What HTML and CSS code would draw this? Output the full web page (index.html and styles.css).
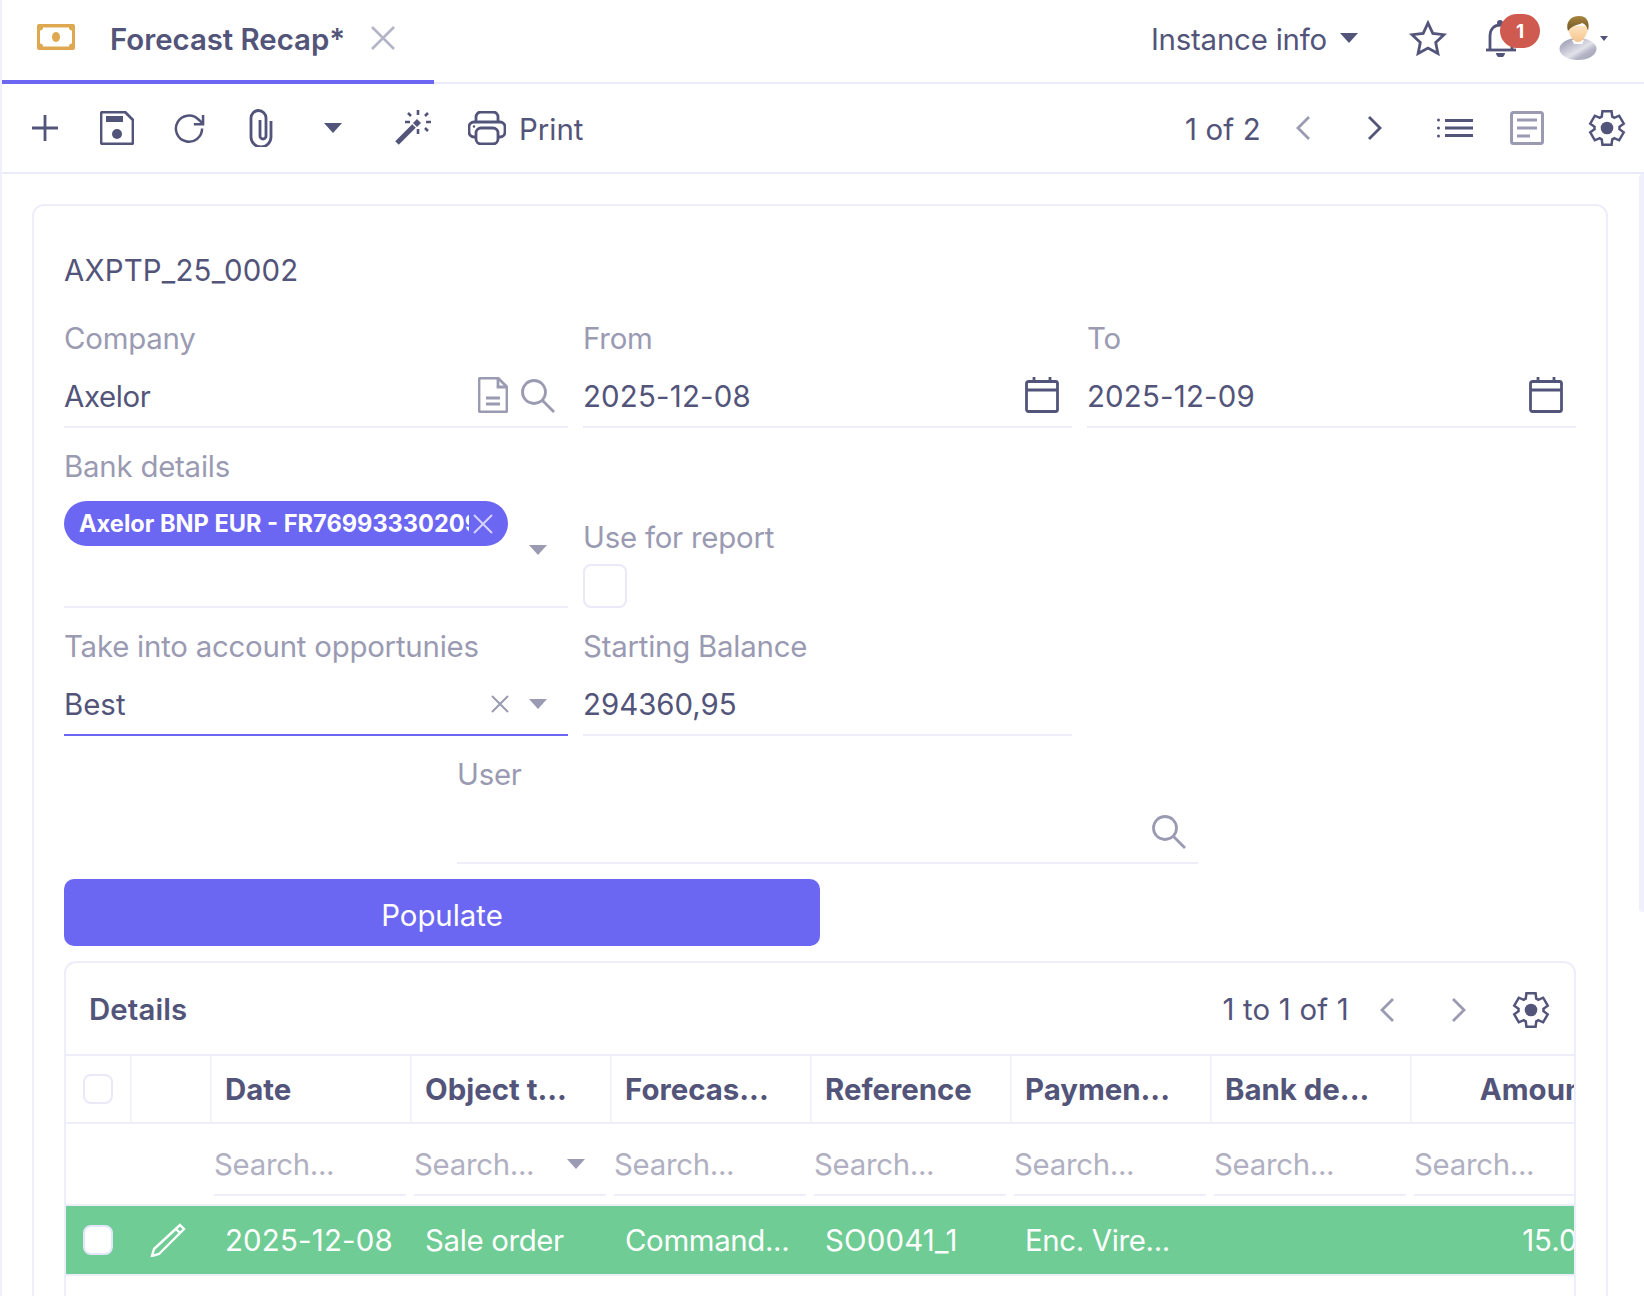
FILE: index.html
```html
<!DOCTYPE html>
<html lang="en">
<head>
<meta charset="utf-8">
<title>Forecast Recap</title>
<link rel="stylesheet" href="styles.css">
</head>
<body>
<div class="app">
  <header class="topbar">
    <div class="tab">
      <svg class="ic-money" viewBox="0 0 38 26"><path class="gold" d="M2 0h34a2 2 0 0 1 2 2v22a2 2 0 0 1-2 2H2a2 2 0 0 1-2-2V2a2 2 0 0 1 2-2z"/><path class="paper" d="M6 3.500h26a3 3 0 0 0 3 3v13a3 3 0 0 0-3 3H6a3 3 0 0 0-3-3v-13a3 3 0 0 0 3-3z"/><ellipse class="gold" cx="19" cy="13" rx="4" ry="5"/></svg>
      <span class="tab-title">Forecast Recap*</span>
      <svg class="ic-close" viewBox="0 0 26 26"><path d="M2 2l22 22M24 2L2 24"/></svg>
    </div>
    <div class="top-right">
      <span class="instance">Instance info</span>
      <span class="caret caret-dark caret-top"></span>
      <svg class="ic-star" viewBox="0 0 38 36"><path d="M19 3l4.800 10.400 11.200 1.300-8.300 7.700 2.200 11.100L19 28l-9.900 5.500 2.200-11.100L3 14.700l11.200-1.300z"/></svg>
      <div class="bell-wrap">
        <svg class="ic-bell" viewBox="0 0 32 38"><path class="st" d="M5 30V17C5 10 9 6 16 6s11 4 11 11v13"/><path class="st" d="M1 31h30"/><circle class="fl" cx="15" cy="4" r="3"/><path class="fl" d="M11 34h9a4.500 4.500 0 0 1-9 0z"/></svg>
        <span class="badge">1</span>
      </div>
      <svg class="ic-avatar" viewBox="0 0 38 44">
        <defs>
          <linearGradient id="shirt" x1="0" y1="0" x2="1" y2="1"><stop offset="0" stop-color="#8f90a8"/><stop offset=".55" stop-color="#e2e2ea"/><stop offset=".7" stop-color="#b4b5c6"/><stop offset="1" stop-color="#9a9bb0"/></linearGradient>
          <linearGradient id="skin" x1="0" y1="0" x2="0" y2="1"><stop offset="0" stop-color="#fde3bf"/><stop offset="1" stop-color="#f6c48e"/></linearGradient>
          <linearGradient id="hair" x1="0" y1="0" x2="0" y2="1"><stop offset="0" stop-color="#a8853f"/><stop offset="1" stop-color="#6e5526"/></linearGradient>
        </defs>
        <ellipse cx="19" cy="33" rx="18.500" ry="11" fill="url(#shirt)"/>
        <path d="M13 24h12l-2 4h-8z" fill="#fff"/>
        <path d="M9 10c0 8 5 16 10 16s10-8 10-16z" fill="url(#skin)"/>
        <path d="M9 15C6 6 12 0 20 0s11 6 9 15c-1-5-3-7-6-8-3 2-10 2-14 8z" fill="url(#hair)"/>
      </svg>
      <span class="caret caret-dark caret-tiny"></span>
    </div>
  </header>

  <nav class="toolbar">
    <div class="tool-pair">
      <button class="tool"><svg class="ic ic-plus" viewBox="0 0 26 26"><path d="M13 0v26M0 13h26"/></svg></button>
      <button class="tool"><svg class="ic" viewBox="0 0 34 34"><path d="M3 1h22l8 8v22a2 2 0 0 1-2 2H3a2 2 0 0 1-2-2V3a2 2 0 0 1 2-2z"/><rect class="fl" x="6" y="5" width="17" height="6"/><circle class="fl" cx="17" cy="23" r="5"/></svg></button>
      <button class="tool"><svg class="ic ic-refresh" viewBox="0 0 32 32"><path d="M29 16A13.500 13.500 0 1 1 25 6.500L30 11"/><path d="M30 2v9.500h-9.500"/></svg></button>
      <button class="tool"><svg class="ic ic-clip" viewBox="0 0 24 38"><path d="M22 12v16a10 10 0 0 1-20 0V9a7.500 7.500 0 0 1 15 0v18a3 3 0 0 1-6 0V11"/></svg></button>
      <button class="tool"><span class="caret caret-dark"></span></button>
    </div>
    <div class="tool-group">
      <button class="tool"><svg class="ic ic-wand" viewBox="0 0 36 36"><path class="thick" d="M2 33l17-17"/><path class="fl" d="M22 9l4 4-4 4-4-4z"/><path class="thin" d="M23 0v5M23 19v5M10 12h5M31 12h5M13 3l3 3M33 3l-3 3M30 18l3 3"/></svg></button>
    </div>
    <button class="print">
      <svg class="ic ic-printer" viewBox="0 0 38 34"><path d="M8 11V6a5 5 0 0 1 5-5h12a5 5 0 0 1 5 5v5"/><path d="M8 26H6a5 5 0 0 1-5-5v-5a5 5 0 0 1 5-5h26a5 5 0 0 1 5 5v5a5 5 0 0 1-5 5h-2"/><rect x="8" y="17" width="22" height="16" rx="5"/><circle class="fl" cx="6" cy="15.500" r="1.200"/></svg>
      <span class="text-low">Print</span>
    </button>
    <div class="toolbar-right">
      <span class="pager text-low">1 of 2</span>
      <div class="tool-group">
        <div class="tool-pair">
          <button class="tool"><svg class="ic ic-chev ic-muted" viewBox="0 0 16 26"><path d="M14 2L3 13l11 11"/></svg></button>
          <button class="tool"><svg class="ic ic-chev" viewBox="0 0 16 26"><path d="M2 2l11 11L2 24"/></svg></button>
        </div>
        <div class="tool-pair">
          <button class="tool"><svg class="ic ic-list" viewBox="0 0 36 20"><path class="thick" d="M8 2.500h28M8 10h28M8 17.500h28"/><circle class="fl" cx="1.500" cy="2" r="1.500"/><circle class="fl" cx="1.500" cy="10" r="1.500"/><circle class="fl" cx="1.500" cy="18" r="1.500"/></svg></button>
          <button class="tool"><svg class="ic ic-muted ic-form" viewBox="0 0 34 34"><rect x="1.500" y="1.500" width="31" height="31" rx="2"/><path d="M7 9h20M7 17h20M7 25h13"/></svg></button>
        </div>
        <button class="tool"><svg class="ic ic-gear" viewBox="0 0 24 24"><path d="M9.250 22l-.4-3.200q-.325-.125-.612-.3t-.563-.375L4.700 19.375l-2.750-4.750 2.575-1.950Q4.500 12.500 4.500 12.338v-.675q0-.163.025-.338L1.950 9.375l2.750-4.750 2.975 1.250q.275-.2.575-.375t.6-.3l.4-3.200h5.500l.4 3.200q.325.125.613.3t.562.375l2.975-1.250 2.750 4.750-2.575 1.950q.025.175.025.338v.675q0 .162-.05.337l2.575 1.950-2.750 4.750-2.950-1.250q-.275.2-.575.375t-.6.3l-.4 3.200h-5.500z"/><circle class="fl" cx="12" cy="12" r="3.800"/></svg></button>
      </div>
    </div>
  </nav>

  <main class="content">
    <section class="card">
      <div class="ref digits">AXPTP_25_0002</div>

      <div class="form-row">
        <div class="field">
          <label class="label">Company</label>
          <div class="value"><span class="grow tight">Axelor</span>
            <svg class="ic ic-muted ic-doc" viewBox="0 0 30 36"><path d="M3 1h17l9 9v23a2 2 0 0 1-2 2H3a2 2 0 0 1-2-2V3a2 2 0 0 1 2-2z"/><path d="M20 1v9h9"/><path d="M8 21h14M8 27h14"/></svg>
            <svg class="ic ic-muted ic-search" viewBox="0 0 34 34"><circle cx="13" cy="13" r="11.500"/><path d="M21.500 21.500L33 33"/></svg>
          </div>
        </div>
        <div class="field">
          <label class="label">From</label>
          <div class="value"><span class="grow digits">2025-12-08</span>
            <svg class="ic ic-cal" viewBox="0 0 34 36"><rect x="1.500" y="4.500" width="31" height="30" rx="2"/><path d="M1 13h32M9 0v6M25 0v6"/></svg>
          </div>
        </div>
        <div class="field">
          <label class="label">To</label>
          <div class="value"><span class="grow digits">2025-12-09</span>
            <svg class="ic ic-cal" viewBox="0 0 34 36"><rect x="1.500" y="4.500" width="31" height="30" rx="2"/><path d="M1 13h32M9 0v6M25 0v6"/></svg>
          </div>
        </div>
      </div>

      <div class="form-row">
        <div class="field">
          <label class="label">Bank details</label>
          <div class="value value-tags">
            <span class="chip"><span class="chip-text">Axelor BNP EUR - FR7699333020961234</span><svg class="ic-chip-x" viewBox="0 0 20 20"><path d="M1 1l18 18M19 1L1 19"/></svg></span>
            <span class="caret caret-muted caret-tags"></span>
          </div>
        </div>
        <div class="field field-bottom">
          <label class="label">Use for report</label>
          <span class="checkbox checkbox-lg"></span>
        </div>
      </div>

      <div class="form-row">
        <div class="field">
          <label class="label">Take into account opportunies</label>
          <div class="value value-focus"><span class="grow">Best</span>
            <svg class="ic-x-small" viewBox="0 0 18 18"><path d="M1 1l16 16M17 1L1 17"/></svg>
            <span class="caret caret-muted"></span>
          </div>
        </div>
        <div class="field">
          <label class="label">Starting Balance</label>
          <div class="value"><span class="grow">294360,95</span></div>
        </div>
      </div>

      <div class="field field-user">
        <label class="label">User</label>
        <div class="value value-user"><span class="grow"></span>
          <svg class="ic ic-muted ic-search" viewBox="0 0 34 34"><circle cx="13" cy="13" r="11.500"/><path d="M21.500 21.500L33 33"/></svg>
        </div>
      </div>

      <button class="populate">Populate</button>

      <section class="panel">
        <div class="panel-head">
          <span class="panel-title">Details</span>
          <div class="panel-tools">
            <span class="pager">1 to 1 of 1</span>
            <svg class="ic ic-chev ic-muted" viewBox="0 0 16 26"><path d="M14 2L3 13l11 11"/></svg>
            <svg class="ic ic-chev ic-muted" viewBox="0 0 16 26"><path d="M2 2l11 11L2 24"/></svg>
            <svg class="ic ic-gear" viewBox="0 0 24 24"><path d="M9.250 22l-.4-3.200q-.325-.125-.612-.3t-.563-.375L4.700 19.375l-2.750-4.750 2.575-1.950Q4.500 12.500 4.500 12.338v-.675q0-.163.025-.338L1.950 9.375l2.750-4.750 2.975 1.250q.275-.2.575-.375t.6-.3l.4-3.200h5.500l.4 3.200q.325.125.613.3t.562.375l2.975-1.250 2.750 4.750-2.575 1.950q.025.175.025.338v.675q0 .162-.05.337l2.575 1.950-2.750 4.750-2.950-1.250q-.275.2-.575.375t-.6.3l-.4 3.200h-5.500z"/><circle class="fl" cx="12" cy="12" r="3.800"/></svg>
          </div>
        </div>
        <div class="table">
          <div class="row row-head">
            <div class="cell cell-check"><span class="checkbox"></span></div>
            <div class="cell"></div>
            <div class="cell">Date</div>
            <div class="cell">Object t...</div>
            <div class="cell">Forecas...</div>
            <div class="cell">Reference</div>
            <div class="cell">Paymen...</div>
            <div class="cell">Bank de...</div>
            <div class="cell cell-num">Amount</div>
          </div>
          <div class="row row-search">
            <div class="cell"></div>
            <div class="cell"></div>
            <div class="cell"><div class="search">Search...</div></div>
            <div class="cell"><div class="search"><span class="grow">Search...</span><span class="caret caret-muted"></span></div></div>
            <div class="cell"><div class="search">Search...</div></div>
            <div class="cell"><div class="search">Search...</div></div>
            <div class="cell"><div class="search">Search...</div></div>
            <div class="cell"><div class="search">Search...</div></div>
            <div class="cell"><div class="search">Search...</div></div>
          </div>
          <div class="row row-data">
            <div class="cell cell-check"><span class="checkbox checkbox-white"></span></div>
            <div class="cell cell-edit"><svg class="ic-pencil" viewBox="0 0 36 34"><path d="M30 2l4 4L9 31l-7 2 2-7zM26 6l4 4"/></svg></div>
            <div class="cell digits">2025-12-08</div>
            <div class="cell tight">Sale order</div>
            <div class="cell tight">Command...</div>
            <div class="cell digits">SO0041_1</div>
            <div class="cell tight">Enc. Vire...</div>
            <div class="cell"></div>
            <div class="cell cell-num">15.00</div>
          </div>
        </div>
      </section>
    </section>
  </main>
  <div class="scrollbar"></div>
</div>
</body>
</html>
```

FILE: styles.css
```css
* { box-sizing: border-box; }
html, body { margin: 0; height: 100%; background: #fff; }
body {
  font-family: Inter, "Liberation Sans", sans-serif;
  font-size: 29.4px;
  color: #53547a;
  overflow: hidden;
}
button { font: inherit; color: inherit; background: none; border: 0; padding: 0; }
svg { display: block; flex: none; }

.app {
  position: relative;
  width: 1644px;
  height: 1296px;
  overflow: hidden;
  border-left: 2px solid #f0f0fd;
  display: flex;
  flex-direction: column;
}
.grow { flex: 1; min-width: 0; }
.fl { fill: #53547a; stroke: none !important; }
.digits { letter-spacing: .2px; }
.tight { letter-spacing: -.35px; }
.text-low { padding-top: 2px; }

/* Generic icon */
.ic { width: 34px; height: 34px; fill: none; stroke: #53547a; stroke-width: 2.800; }
.ic-muted { stroke: #9a9ab2; }
.ic-form { stroke-width: 3; }
.ic-refresh { width: 31px; height: 31px; stroke-width: 2.600; }
.ic-plus { width: 26px; height: 26px; }
.ic-clip { width: 24px; height: 38px; }
.ic-wand { width: 36px; height: 36px; }
.ic-wand .thick { stroke-width: 5; }
.ic-wand .thin { stroke-width: 2.600; }
.ic-printer { width: 38px; height: 34px; }
.ic-chev { width: 16px; height: 26px; }
.ic-list { width: 36px; height: 20px; }
.ic-list .thick { stroke-width: 3.200; }
.ic-gear { width: 40px; height: 40px; stroke-width: 1.500; }
.ic-doc { width: 30px; height: 36px; margin-right: 13px; margin-top: -2px; }
.ic-search { width: 34px; height: 34px; margin-right: 13px; }
.ic-cal { height: 36px; margin-right: 13px; margin-top: -2px; }

/* Carets */
.caret { display: block; flex: none; width: 0; height: 0; border-left: 9px solid transparent; border-right: 9px solid transparent; }
.caret-dark { border-top: 10px solid #53547a; }
.caret-muted { border-top: 10px solid #9a9ab2; }
.caret-top { margin-left: 13px; margin-right: 2px; }
.caret-tiny { border-width: 5px 4px 0; border-left-color: transparent; border-right-color: transparent; margin-left: 3px; margin-right: 36px; }

/* Top bar */
.topbar { flex: none; height: 84px; display: flex; align-items: center; justify-content: space-between; border-bottom: 2px solid #e9ebfb; position: relative; }
.tab { align-self: stretch; width: 432px; margin-bottom: -2px; border-bottom: 4px solid #6c67f2; display: flex; align-items: center; padding: 0 0 2px 35px; }
.ic-money { width: 38px; height: 26px; margin-top: -4px; }
.gold { fill: #dda84f; }
.paper { fill: #fff; }
.tab-title { margin-left: 35px; font-weight: 600; letter-spacing: -.03px; }
.ic-close { width: 26px; height: 26px; margin-left: 25px; margin-top: -3px; fill: none; stroke: #b4b4c8; stroke-width: 2.600; }
.top-right { display: flex; align-items: center; padding-bottom: 6px; }
.instance { padding-top: 3px; letter-spacing: -.2px; }
.ic-star { width: 38px; height: 36px; margin-left: 49px; fill: none; stroke: #53547a; stroke-width: 2.800; }
.bell-wrap { position: relative; width: 32px; height: 38px; margin-left: 38px; }
.ic-bell { width: 32px; height: 38px; }
.ic-bell .st { fill: none; stroke: #53547a; stroke-width: 2.800; }
.badge { position: absolute; left: 15px; top: -5px; width: 40px; height: 34px; border-radius: 17px; background: #cf5a50; color: #fff; font-size: 19px; font-weight: 700; display: flex; align-items: center; justify-content: center; }
.ic-avatar { width: 38px; height: 44px; margin-left: 42px; }

/* Toolbar */
.toolbar { flex: none; height: 90px; padding: 0 0 0 7px; display: flex; align-items: center; gap: 8px; border-bottom: 2px solid #e9ebfb; }
.tool-group, .tool-pair { display: flex; align-items: center; }
.tool-group { gap: 8px; }
.tool { width: 72px; height: 60px; display: flex; align-items: center; justify-content: center; }
.print { display: flex; align-items: center; gap: 13px; padding-left: 11px; }
.toolbar-right { margin-left: auto; margin-right: 1px; display: flex; align-items: center; gap: 6px; }
.pager { white-space: nowrap; letter-spacing: .2px; }

/* Card */
.content { flex: 1; min-height: 0; padding: 30px 0 0 30px; }
.card { width: 1576px; border: 2px solid #eeeefb; border-radius: 12px; padding: 36px 30px 30px; }
.ref { height: 58px; line-height: 58px; margin-bottom: 10px; }
.form-row { display: grid; grid-template-columns: 504px 489px 489px; column-gap: 15px; margin-bottom: 10px; }
.field { display: flex; flex-direction: column; min-width: 0; }
.field-bottom { justify-content: flex-end; }
.label { height: 58px; line-height: 58px; color: #9a9ab2; letter-spacing: -.22px; }
.field-bottom .label { height: 52px; line-height: 52px; }
.value { height: 60px; padding-bottom: 2px; display: flex; align-items: center; border-bottom: 2px solid #eeeefb; }
.value-focus { border-bottom-color: #6c67f2; }
.value-focus .caret { margin-right: 21px; }
.value-tags { height: 112px; padding-top: 5px; align-items: flex-start; }
.chip { width: 444px; height: 45px; border-radius: 23px; background: #6c67f2; color: #fff; display: flex; align-items: center; padding: 0 15px; font-size: 23.600px; font-weight: 700; }
.chip-text { flex: 1; min-width: 0; overflow: hidden; white-space: nowrap; }
.ic-chip-x { width: 20px; height: 20px; margin-left: 4px; fill: none; stroke: #d5d3fb; stroke-width: 2; }
.caret-tags { margin: 44px 0 0 21px; }
.ic-x-small { width: 18px; height: 18px; margin-right: 20px; fill: none; stroke: #9a9ab2; stroke-width: 2; }
.checkbox { display: block; flex: none; width: 30px; height: 30px; border: 2px solid #e9e9fa; border-radius: 8px; background: #fff; }
.checkbox-lg { width: 44px; height: 44px; }
.checkbox-white { border-color: #e3e5fa; }

.field-user { width: 741px; margin-left: 393px; }
.field-user .ic-search { margin-right: 12px; }
.populate { display: block; width: 756px; height: 67px; margin-top: 15px; padding-top: 6px; border-radius: 10px; background: #6c67f2; color: #fff; text-align: center; }

/* Details panel */
.panel { margin-top: 15px; border: 2px solid #eeeefb; border-radius: 12px; overflow: hidden; }
.panel-head { height: 93px; border-bottom: 2px solid #eeeefb; padding: 2px 23px 0 23px; display: flex; align-items: center; justify-content: space-between; }
.panel-title { font-weight: 600; letter-spacing: .1px; }
.panel-tools { display: flex; align-items: center; }
.panel-tools .ic-chev { margin-left: 30px; }
.panel-tools .ic-chev + .ic-chev { margin-left: 56px; }
.panel-tools .ic-gear { margin-left: 44px; }

.table { overflow: hidden; min-height: 400px; }
.row { display: grid; grid-template-columns: 66px 80px repeat(7, 200px); width: 1546px; align-items: stretch; }
.row-head { height: 68px; border-bottom: 2px solid #eeeefb; font-weight: 700; }
.row-head .cell { border-right: 2px solid #f3f3fc; }
.row-search { height: 82px; border-bottom: 2px solid #eeeefb; }
.row-data { height: 70px; background: #6fcc94; color: #fff; border-bottom: 2px solid #eeeefb; }
.cell { display: flex; align-items: center; padding: 0 13px; white-space: nowrap; min-width: 0; }
.cell-check { padding: 0 0 0 17px; }
.cell-edit { padding: 0 0 0 18px; }
.cell-num { justify-content: flex-end; padding-right: 16px; }
.row-search .cell { padding: 0 6px 0 2px; align-items: flex-start; }
.search { width: 100%; height: 72px; padding-top: 23px; border-bottom: 2px solid #eeeefb; color: #b0b0c2; display: flex; align-items: flex-start; line-height: 36px; letter-spacing: -.3px; }
.search .caret { margin: 12px 21px 0 0; }
.ic-pencil { width: 36px; height: 34px; fill: none; stroke: #fff; stroke-width: 2.400; }

.scrollbar { position: absolute; right: 0; top: 174px; width: 5px; height: 738px; background: #f0f0fd; border-radius: 4px 0 0 4px; }
```
